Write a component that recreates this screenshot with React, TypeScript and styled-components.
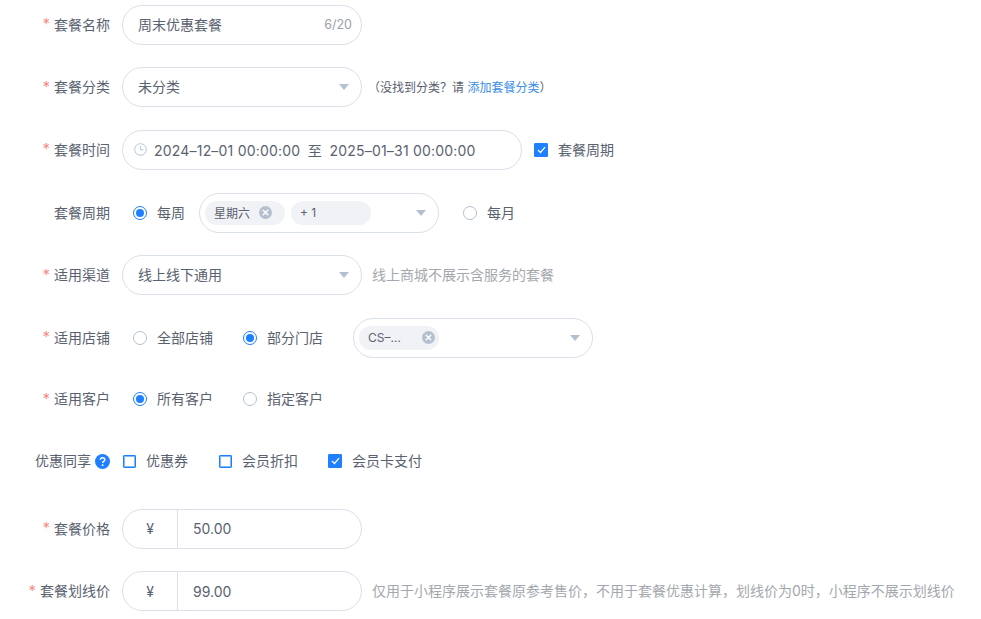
import React from 'react';
import styled, { createGlobalStyle } from 'styled-components';

const Global = createGlobalStyle`
  html, body { margin: 0; padding: 0; background: #fff; }
  body { font-family: Inter, "Noto Sans CJK SC", sans-serif; font-size: 14px; color: #5a6270; overflow: hidden; }
`;

const Form = styled.div`
  padding-top: 4.6px;
  display: flex;
  flex-direction: column;
  gap: 22.67px;
`;

const Row = styled.div<{ $extra?: number }>`
  display: flex;
  align-items: center;
  height: 40px;
  margin-bottom: ${p => p.$extra ?? 0}px;
`;

const Label = styled.div`
  box-sizing: border-box;
  width: 110px;
  margin-right: 12px;
  padding-bottom: 2px;
  flex: none;
  display: flex;
  justify-content: flex-end;
  align-items: center;
  color: #5a6270;
  font-size: 14px;
  white-space: nowrap;
`;

const Star = styled.span`
  color: #f98b8b;
  margin-right: 4px;
  font-size: 15px;
`;

const Help = styled.svg`
  width: 15px;
  height: 15px;
  margin-left: 4px;
  margin-top: 2px;
  flex: none;
`;

const Box = styled.div<{ $w: number; $pl?: number; $ml?: number }>`
  box-sizing: border-box;
  width: ${p => p.$w}px;
  height: 40px;
  margin-left: ${p => p.$ml ?? 0}px;
  border: 1px solid #d9e0e8;
  border-radius: 20px;
  display: flex;
  align-items: center;
  padding-left: ${p => p.$pl ?? 15}px;
  padding-right: 12px;
  flex: none;
  color: #5a6270;
`;

const Value = styled.span`
  flex: 1;
  padding-bottom: 2px;
  white-space: nowrap;
`;

const Count = styled.span`
  font-size: 12.5px;
  color: #9aa1aa;
  margin-right: -3px;
`;

const Caret = styled.i`
  width: 0;
  height: 0;
  border-left: 5px solid transparent;
  border-right: 5px solid transparent;
  border-top: 6px solid #b4c0cf;
  flex: none;
`;

const Note = styled.span`
  margin-left: 6px;
  padding-bottom: 2px;
  font-size: 12px;
  color: #5a6270;
  white-space: nowrap;
`;

const LinkText = styled.span`
  color: #3a8ee6;
`;

const Hint = styled.span`
  margin-left: 10px;
  padding-bottom: 2px;
  font-size: 14px;
  color: #a4a8ae;
  white-space: nowrap;
`;

const DateText = styled.span`
  margin-left: 7px;
  white-space: nowrap;
  letter-spacing: 0.2px;
`;

const DateSep = styled.span`
  margin: 0 7.5px;
`;

const CheckBox = styled.span<{ $on?: boolean }>`
  box-sizing: border-box;
  width: ${p => (p.$on ? 14 : 13)}px;
  height: ${p => (p.$on ? 14 : 13)}px;
  border: 1px solid #1e80ff;
  box-shadow: ${p => (p.$on ? 'none' : 'inset 0 0 0 1px rgba(30, 128, 255, 0.55)')};
  background: ${p => (p.$on ? '#1e80ff' : '#fff')};
  border-radius: 1px;
  display: inline-flex;
  align-items: center;
  justify-content: center;
  flex: none;
`;

const CheckItem = styled.label<{ $ml: number }>`
  display: inline-flex;
  align-items: center;
  gap: 10px;
  margin-left: ${p => p.$ml}px;
  white-space: nowrap;
  color: #5a6270;
`;

const Caption = styled.span`
  padding-bottom: 2px;
`;

const RadioDot = styled.span<{ $on?: boolean }>`
  box-sizing: border-box;
  width: 14px;
  height: 14px;
  border-radius: 50%;
  border: 1px solid ${p => (p.$on ? '#1e80ff' : '#b4c0cf')};
  background: #fff;
  display: inline-flex;
  align-items: center;
  justify-content: center;
  flex: none;
  &::after {
    content: '';
    width: 8px;
    height: 8px;
    border-radius: 50%;
    background: ${p => (p.$on ? '#1e80ff' : 'transparent')};
  }
`;

const RadioItem = styled.label<{ $ml: number }>`
  display: inline-flex;
  align-items: center;
  gap: 10px;
  margin-left: ${p => p.$ml}px;
  white-space: nowrap;
  color: #5a6270;
`;

const TagBox = styled(Box)`
  padding-left: 5px;
  gap: 6px;
`;

const Tag = styled.span`
  box-sizing: border-box;
  width: 80px;
  height: 24px;
  border-radius: 12px;
  background: #f0f2f5;
  display: inline-flex;
  align-items: center;
  padding-left: 9px;
  font-size: 12px;
  color: #5a6270;
  flex: none;
  white-space: nowrap;
`;

const TagText = styled.span<{ $w: number }>`
  width: ${p => p.$w}px;
  flex: none;
`;

const TagClose = styled.svg`
  width: 13px;
  height: 13px;
  flex: none;
`;

const Spacer = styled.span`
  flex: 1;
`;

const PriceBox = styled.div`
  box-sizing: border-box;
  width: 240px;
  height: 40px;
  border: 1px solid #d9e0e8;
  border-radius: 20px;
  display: flex;
  align-items: stretch;
  flex: none;
`;

const Currency = styled.span`
  width: 54px;
  border-right: 1px solid #d9e0e8;
  display: flex;
  align-items: center;
  justify-content: center;
  font-size: 14px;
  color: #5a6270;
`;

const PriceValue = styled.span`
  padding-left: 15px;
  display: flex;
  align-items: center;
`;

const Close = () => (
  <TagClose viewBox="0 0 13 13">
    <circle cx="6.5" cy="6.5" r="6.5" fill="#b4c0cf" />
    <path d="M4.2 4.2l4.6 4.6M8.8 4.2l-4.6 4.6" stroke="#fff" strokeWidth="1.4" strokeLinecap="round" />
  </TagClose>
);

const Tick = () => (
  <svg width="9" height="8" viewBox="0 0 9 8">
    <path d="M1 4l2.5 2.5L8 1.2" fill="none" stroke="#fff" strokeWidth="1.2" />
  </svg>
);

const Clock = () => (
  <svg width="13" height="13" viewBox="0 0 13 13">
    <circle cx="6.5" cy="6.5" r="5.8" fill="none" stroke="#b4c6d8" strokeWidth="1" />
    <path d="M6.5 3v3.8h3" fill="none" stroke="#b4c6d8" strokeWidth="1" />
  </svg>
);

export default function App() {
  return (
    <>
      <Global />
      <Form>
        <Row>
          <Label><Star>*</Star>套餐名称</Label>
          <Box $w={240}>
            <Value>周末优惠套餐</Value>
            <Count>6/20</Count>
          </Box>
        </Row>
        <Row>
          <Label><Star>*</Star>套餐分类</Label>
          <Box $w={240}>
            <Value>未分类</Value>
            <Caret />
          </Box>
          <Note>（没找到分类？请 <LinkText>添加套餐分类</LinkText>）</Note>
        </Row>
        <Row>
          <Label><Star>*</Star>套餐时间</Label>
          <Box $w={400} $pl={11}>
            <Clock />
            <DateText>2024–12–01 00:00:00<DateSep>至</DateSep>2025–01–31 00:00:00</DateText>
          </Box>
          <CheckItem $ml={12}><CheckBox $on><Tick /></CheckBox><Caption>套餐周期</Caption></CheckItem>
        </Row>
        <Row>
          <Label>套餐周期</Label>
          <RadioItem $ml={11}><RadioDot $on /><Caption>每周</Caption></RadioItem>
          <TagBox $w={240} $ml={14}>
            <Tag><TagText $w={45}>星期六</TagText><Close /></Tag>
            <Tag>+ 1</Tag>
            <Spacer />
            <Caret />
          </TagBox>
          <RadioItem $ml={24}><RadioDot /><Caption>每月</Caption></RadioItem>
        </Row>
        <Row>
          <Label><Star>*</Star>适用渠道</Label>
          <Box $w={240}>
            <Value>线上线下通用</Value>
            <Caret />
          </Box>
          <Hint>线上商城不展示含服务的套餐</Hint>
        </Row>
        <Row $extra={-1.2}>
          <Label><Star>*</Star>适用店铺</Label>
          <RadioItem $ml={11}><RadioDot /><Caption>全部店铺</Caption></RadioItem>
          <RadioItem $ml={30}><RadioDot $on /><Caption>部分门店</Caption></RadioItem>
          <TagBox $w={240} $ml={30}>
            <Tag><TagText $w={54}>CS–…</TagText><Close /></Tag>
            <Spacer />
            <Caret />
          </TagBox>
        </Row>
        <Row $extra={-1}>
          <Label><Star>*</Star>适用客户</Label>
          <RadioItem $ml={11}><RadioDot $on /><Caption>所有客户</Caption></RadioItem>
          <RadioItem $ml={30}><RadioDot /><Caption>指定客户</Caption></RadioItem>
        </Row>
        <Row $extra={4.9}>
          <Label>
            优惠同享
            <Help viewBox="0 0 15 15">
              <circle cx="7.5" cy="7.5" r="7.5" fill="#1e80ff" />
              <path d="M5.3 5.8c0-1.3 1-2.1 2.3-2.1s2.2.8 2.2 2c0 1.7-2.2 1.7-2.2 3.4" fill="none" stroke="#fff" strokeWidth="1.4" />
              <circle cx="7.6" cy="11.2" r="0.9" fill="#fff" />
            </Help>
          </Label>
          <CheckItem $ml={1}><CheckBox /><Caption>优惠券</Caption></CheckItem>
          <CheckItem $ml={31}><CheckBox /><Caption>会员折扣</Caption></CheckItem>
          <CheckItem $ml={30}><CheckBox $on><Tick /></CheckBox><Caption>会员卡支付</Caption></CheckItem>
        </Row>
        <Row>
          <Label><Star>*</Star>套餐价格</Label>
          <PriceBox>
            <Currency>¥</Currency>
            <PriceValue>50.00</PriceValue>
          </PriceBox>
        </Row>
        <Row>
          <Label><Star>*</Star>套餐划线价</Label>
          <PriceBox>
            <Currency>¥</Currency>
            <PriceValue>99.00</PriceValue>
          </PriceBox>
          <Hint>仅用于小程序展示套餐原参考售价，不用于套餐优惠计算，划线价为0时，小程序不展示划线价</Hint>
        </Row>
      </Form>
    </>
  );
}
